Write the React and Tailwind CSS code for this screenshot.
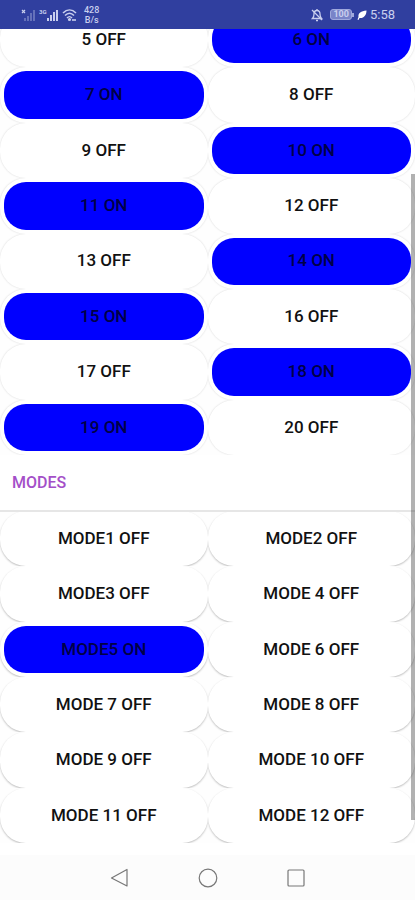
import React from "react";

const channels = [
  { label: "5 OFF", on: false },
  { label: "6 ON", on: true },
  { label: "7 ON", on: true },
  { label: "8 OFF", on: false },
  { label: "9 OFF", on: false },
  { label: "10 ON", on: true },
  { label: "11 ON", on: true },
  { label: "12 OFF", on: false },
  { label: "13 OFF", on: false },
  { label: "14 ON", on: true },
  { label: "15 ON", on: true },
  { label: "16 OFF", on: false },
  { label: "17 OFF", on: false },
  { label: "18 ON", on: true },
  { label: "19 ON", on: true },
  { label: "20 OFF", on: false },
];

const modes = [
  { label: "MODE1 OFF", on: false },
  { label: "MODE2 OFF", on: false },
  { label: "MODE3 OFF", on: false },
  { label: "MODE 4 OFF", on: false },
  { label: "MODE5 ON", on: true },
  { label: "MODE 6 OFF", on: false },
  { label: "MODE 7 OFF", on: false },
  { label: "MODE 8 OFF", on: false },
  { label: "MODE 9 OFF", on: false },
  { label: "MODE 10 OFF", on: false },
  { label: "MODE 11 OFF", on: false },
  { label: "MODE 12 OFF", on: false },
];

// The cell clips the shadow, so it only shows round the corners
const ToggleButton = ({ item, shadow }) => (
  <div className="overflow-hidden bg-[#fefefe]">
    <button
      type="button"
      aria-pressed={item.on}
      className={`flex h-full w-full rounded-[26px] bg-white px-1 py-1 text-[17px] font-medium ${shadow}`}
    >
      <span
        className={`flex flex-1 items-center justify-center self-stretch rounded-[22px] ${
          item.on ? "bg-[#0000ff] text-[#000046]" : "text-[#111111]"
        }`}
      >
        {item.label}
      </span>
    </button>
  </div>
);

const StatusBar = () => (
  <header className="relative z-20 flex h-[29px] items-center justify-between bg-[#303f9f] pr-5 pl-5 text-[#c9cfee]">
    <div className="flex items-center gap-[3px]">
      <svg width="16" height="14" viewBox="0 0 16 14" fill="currentColor" aria-hidden="true">
        <path d="M2 2l3 3M5 2L2 5" stroke="currentColor" strokeWidth="1.2" />
        <g opacity="0.35">
          <rect x="4" y="10" width="2" height="3" />
          <rect x="7" y="8" width="2" height="5" />
          <rect x="10" y="5" width="2" height="8" />
          <rect x="13" y="2" width="2" height="11" />
        </g>
      </svg>
      <svg width="20" height="14" viewBox="0 0 20 14" fill="currentColor" aria-hidden="true">
        <text x="0" y="6" fontSize="6" fontWeight="700" fontFamily="Roboto, sans-serif">3G</text>
        <rect x="8" y="10" width="2" height="3" />
        <rect x="11" y="7" width="2" height="6" />
        <rect x="14" y="4" width="2" height="9" />
        <rect x="17" y="2" width="2" height="11" />
      </svg>
      <svg width="15" height="14" viewBox="0 0 15 14" fill="none" stroke="currentColor" strokeWidth="1.6" aria-hidden="true">
        <path d="M1 5C5 1 10 1 14 5" />
        <path d="M3 7.5c3-3 6-3 9 0" />
        <path d="M5 10c2-2 3-2 5 0" />
        <circle cx="7.5" cy="11.5" r="0.8" fill="currentColor" />
        <path d="M10 12h4" />
      </svg>
      <div className="pl-1 text-center text-[9px] leading-[10px] font-medium">
        <div>428</div>
        <div>B/s</div>
      </div>
    </div>
    <div className="flex items-center gap-[3px]">
      <svg width="12" height="14" viewBox="0 0 12 14" fill="none" stroke="currentColor" strokeWidth="1.3" aria-hidden="true">
        <path d="M1.5 10.500h9c-1-1-1.500-2-1.500-4.500 0-2-1-3.500-3-3.500S3 4 3 6c0 2.500-.5 3.500-1.500 4.500z" />
        <path d="M6 1v1.500M5 12.500h2M1 2l10 10" />
      </svg>
      <div className="flex items-center pl-1">
        <span className="rounded-[3px] border border-[#9fa8dc] bg-[#7984c8] px-[2px] text-[9px] leading-[9px] font-bold">
          100
        </span>
        <span className="h-1 w-[2px] bg-[#9fa8dc]" />
      </div>
      <svg width="10" height="12" viewBox="0 0 10 12" fill="#ffffff" aria-hidden="true">
        <path d="M9.500 1.500C4 2 1 4 1.500 8L.5 10.500l1 .5 1-2C7 9.500 9.500 6 9.500 1.500z" />
      </svg>
      <time className="text-[13px] leading-4">5:58</time>
    </div>
  </header>
);

const NavBar = () => (
  <nav className="mt-auto flex h-[45px] items-center justify-center gap-16 bg-[#fcfcfc] text-[#777777]">
    <button type="button" aria-label="Back">
      <svg width="24" height="24" viewBox="0 0 24 24" fill="none" stroke="currentColor" strokeWidth="1.2" strokeLinejoin="round">
        <path d="M19 3.500v16.500L3.500 12z" />
      </svg>
    </button>
    <button type="button" aria-label="Home">
      <svg width="24" height="24" viewBox="0 0 24 24" fill="none" stroke="currentColor" strokeWidth="1.2">
        <circle cx="12" cy="12" r="8.800" />
      </svg>
    </button>
    <button type="button" aria-label="Recent apps">
      <svg width="24" height="24" viewBox="0 0 24 24" fill="none" stroke="currentColor" strokeWidth="1.2">
        <rect x="4" y="4" width="16" height="16" rx="1" />
      </svg>
    </button>
  </nav>
);

export default function App() {
  return (
    <div className="flex min-h-screen flex-col bg-white font-['Roboto',sans-serif]">
      <StatusBar />
      <main className="relative overflow-hidden">
        {/* list is scrolled part way down, first row sits under the status bar */}
        <section className="-mt-[17px] grid h-[443px] auto-rows-fr grid-cols-2">
          {channels.map((item) => (
            <ToggleButton key={item.label} item={item} shadow="shadow-[0_0_2px_rgba(0,0,0,0.16)]" />
          ))}
        </section>
        <h2 className="relative z-10 -mb-px flex h-[57px] items-center border-b-2 border-[#e6e6e6] px-3 text-base font-medium text-[#a44fc8]">
          MODES
        </h2>
        <section className="grid h-[332px] auto-rows-fr grid-cols-2">
          {modes.map((item) => (
            <ToggleButton key={item.label} item={item} shadow="shadow-[0_1px_2px_rgba(0,0,0,0.26)]" />
          ))}
        </section>
        <div className="absolute top-[145px] right-0 bottom-[23px] z-10 w-1 bg-black/30" />
      </main>
      <NavBar />
    </div>
  );
}
